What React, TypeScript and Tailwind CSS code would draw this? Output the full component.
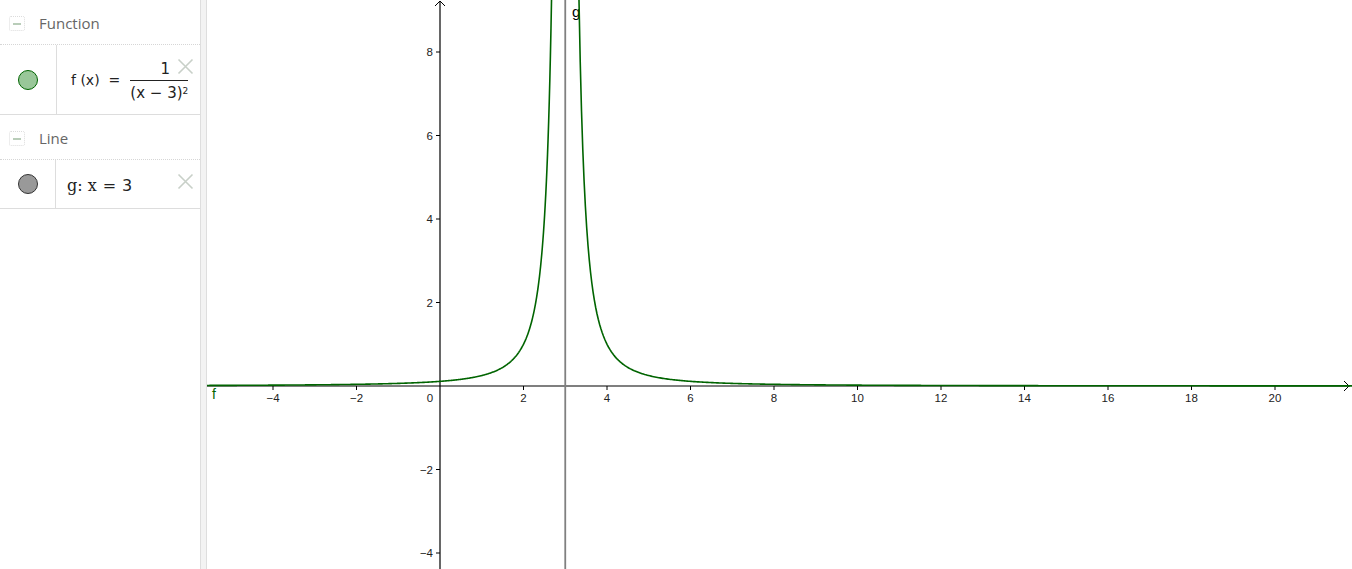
import React from "react";

const OX = 440;
const OY = 386;
const S = 41.75;
const sx = (x: number) => OX + S * x;
const sy = (y: number) => OY - S * y;

function branch(a: number, b: number) {
  const pts: string[] = [];
  const n = 600;
  for (let i = 0; i <= n; i++) {
    const t = i / n;
    const x = a + (b - a) * t;
    const y = 1 / ((x - 3) * (x - 3));
    pts.push(`${sx(x).toFixed(2)},${sy(y).toFixed(2)}`);
  }
  return "M" + pts.join(" L");
}

function Graph() {
  const xl = -5.6;
  const xr = (1352 - OX) / S;
  const cut = 1 / Math.sqrt((OY + 2) / S);
  const left = branch(xl, 3 - cut);
  const right = branch(3 + cut, xr);
  const xTicks = [-4, -2, 0, 2, 4, 6, 8, 10, 12, 14, 16, 18, 20];
  const yTicks = [8, 6, 4, 2, -2, -4];
  const lab = (v: number) => (v < 0 ? "\u2212" + Math.abs(v) : String(v));
  return (
    <svg className="block" width={1145} height={569} viewBox="207 0 1145 569">
      <rect x={207} y={0} width={1145} height={569} fill="#ffffff" />
      <line x1={OX} y1={569} x2={OX} y2={1} stroke="#000" strokeWidth={1.2} />
      <polyline points={`${OX - 5},6 ${OX},1 ${OX + 5},6`} fill="none" stroke="#000" strokeWidth={1} />
      <line x1={207} y1={OY} x2={1350} y2={OY} stroke="#000" strokeWidth={1.2} />
      <polyline points={`1344,381 1349,386 1344,391`} fill="none" stroke="#000" strokeWidth={1} />
      {xTicks.map((v) => (
        <g key={"x" + v}>
          {v !== 0 && <line x1={sx(v)} y1={OY} x2={sx(v)} y2={OY + 4} stroke="#000" strokeWidth={1} />}
          <text
            x={v === 0 ? OX - 10 : sx(v)}
            y={OY + 16}
            fontSize={11.5}
            fontFamily="'Liberation Sans', Arial, sans-serif"
            textAnchor="middle"
            fill="#222"
          >
            {lab(v)}
          </text>
        </g>
      ))}
      {yTicks.map((v) => (
        <g key={"y" + v}>
          <line x1={OX - 4} y1={sy(v)} x2={OX} y2={sy(v)} stroke="#000" strokeWidth={1} />
          <text
            x={OX - 7}
            y={sy(v) + 4}
            fontSize={11.5}
            fontFamily="'Liberation Sans', Arial, sans-serif"
            textAnchor="end"
            fill="#222"
          >
            {lab(v)}
          </text>
        </g>
      ))}
      <line x1={sx(3)} y1={0} x2={sx(3)} y2={569} stroke="#808080" strokeWidth={1.8} />
      <text x={572} y={17} fontSize={15} fontFamily="'Liberation Sans', Arial, sans-serif" fill="#000">
        g
      </text>
      <path d={left} fill="none" stroke="#006400" strokeWidth={1.6} />
      <path d={right} fill="none" stroke="#006400" strokeWidth={1.6} />
      <text x={212} y={399} fontSize={14} fontFamily="'Liberation Sans', Arial, sans-serif" fill="#006400">
        f
      </text>
    </svg>
  );
}

function MinusBox() {
  return (
    <div className="w-[16px] h-[15px] border border-dotted border-[#dcdcdc] rounded-[2px] flex items-center justify-center">
      <div className="w-[8px] h-[2px] bg-[#b9cdb9]" />
    </div>
  );
}

function CloseX() {
  return (
    <svg className="absolute right-[6px] top-[13px]" width={17} height={17} viewBox="0 0 17 17">
      <path d="M1.5 1.5 L15.5 15.5 M15.5 1.5 L1.5 15.5" stroke="#c8d0c8" strokeWidth={1.6} fill="none" />
    </svg>
  );
}

function Header({ title, h }: { title: string; h: string }) {
  return (
    <div className={`${h} flex items-center pl-[9px] pt-[3px] gap-[14px] border-b border-dotted border-[#d6d6d6]`}>
      <MinusBox />
      <span className="text-[15px] text-[#666666]" style={{ fontFamily: "'Open Sans', 'Noto Sans', sans-serif" }}>
        {title}
      </span>
    </div>
  );
}

export default function App() {
  return (
    <div className="w-[1352px] h-[569px] flex bg-white overflow-hidden">
      <div className="w-[200px] h-full flex flex-col bg-white">
        <Header title="Function" h="h-[45px]" />
        <div className="h-[70px] flex border-b border-[#dddddd] relative">
          <div className="w-[57px] border-r border-[#dddddd] flex items-center justify-center">
            <div className="w-[20px] h-[20px] rounded-full bg-[#99c799] border border-[#006400]" />
          </div>
          <div
            className="flex-1 flex items-center pl-[14px] text-[14px] text-[#222] whitespace-nowrap"
            style={{ fontFamily: "'DejaVu Sans', 'Noto Sans', sans-serif" }}
          >
            <span className="mt-[2px]">f (x)</span>
            <span className="ml-[9px] mr-[10px] mt-[2px]">=</span>
            <span className="flex flex-col items-center w-[58px] mt-[1px]">
              <span className="text-[15px] leading-[22px] pl-[12px]">1</span>
              <span className="border-t border-[#222] pt-[2px] text-[15px] leading-[20px] w-[58px] text-center whitespace-nowrap">
                (x − 3)<sup className="text-[9px] relative -top-[4px]">2</sup>
              </span>
            </span>
          </div>
          <CloseX />
        </div>
        <Header title="Line" h="h-[45px]" />
        <div className="h-[49px] flex border-b border-[#dddddd] relative">
          <div className="w-[56px] border-r border-[#dddddd] flex items-center justify-center">
            <div className="w-[20px] h-[20px] rounded-full bg-[#999999] border border-[#333333]" />
          </div>
          <div className="flex-1 flex items-center pl-[11px] pt-[4px] text-[16px] text-[#222] whitespace-nowrap">
            <span style={{ fontFamily: "'DejaVu Serif', 'Liberation Serif', serif" }}>g:</span>
            <span className="ml-[5px]" style={{ fontFamily: "'DejaVu Serif', 'Liberation Serif', serif" }}>x</span>
            <span className="mx-[6px]" style={{ fontFamily: "'DejaVu Sans', sans-serif" }}>=</span>
            <span style={{ fontFamily: "'DejaVu Sans', sans-serif" }}>3</span>
          </div>
          <CloseX />
        </div>
      </div>
      <div className="w-[7px] h-full bg-[#f3f3f3] border-l border-r border-[#dedede]" />
      <Graph />
    </div>
  );
}
